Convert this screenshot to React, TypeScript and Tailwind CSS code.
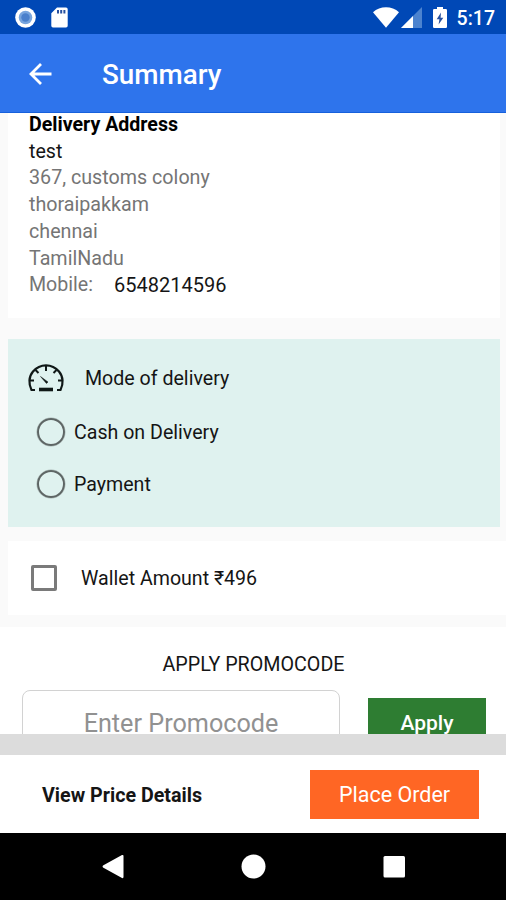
import React from 'react';

const addressLines = ['367, customs colony', 'thoraipakkam', 'chennai', 'TamilNadu'];

const StatusBar: React.FC = () => (
  <div className="flex h-[34px] shrink-0 items-center justify-between bg-[#0048b6] pr-[11px] pl-[15px]">
    <div className="flex items-center gap-[15px]">
      <svg className="h-[21px] w-[21px]" viewBox="0 0 21 21">
        <circle cx="10.5" cy="10.5" r="10.3" fill="#fff" />
        <circle cx="10.5" cy="10.5" r="6.8" fill="#78a5de" />
        <circle cx="10.5" cy="10.5" r="4.2" fill="#4a80cc" />
      </svg>
      <svg className="h-[21px] w-[17px]" viewBox="0 0 17 21">
        <path d="M6 0.5h9a1.7 1.7 0 0 1 1.7 1.7v16.6a1.7 1.7 0 0 1-1.7 1.7H2a1.7 1.7 0 0 1-1.7-1.7V6.3z" fill="#fff" />
        <path d="M6 3h2v3.5H6zM9.2 3h2v3.5h-2zM12.4 3h2v3.5h-2z" fill="#27509f" />
      </svg>
    </div>
    <div className="flex items-center">
      <svg className="h-[21px] w-[26px]" viewBox="0 0 26 21">
        <path d="M0 5.2C7-1.5 19-1.5 26 5.2L13 20.7z" fill="#fff" />
      </svg>
      <svg className="ml-[2px] h-[21px] w-[21px]" viewBox="0 0 21 21">
        <path d="M21 0v21H0z" fill="#4c83cf" />
        <path d="M12 9v12H0z" fill="#fff" />
      </svg>
      <svg className="ml-[11px] h-[21px] w-[14px]" viewBox="0 0 14 21">
        <path d="M4 0h6v2h2.8a1.2 1.2 0 0 1 1.2 1.2v16.6a1.2 1.2 0 0 1-1.2 1.2H1.2A1.2 1.2 0 0 1 0 19.8V3.2A1.2 1.2 0 0 1 1.2 2H4z" fill="#fff" />
        <path d="M8 5.5L3.7 12.2h2.7L5.6 17.5l4.7-6.8H7.6z" fill="#27509f" />
      </svg>
      <span className="ml-[10px] pt-[3px] text-[19.5px] leading-none font-medium text-white">5:17</span>
    </div>
  </div>
);

const AppBar: React.FC = () => (
  <div className="flex h-[79px] shrink-0 items-center border-b border-[#1660dc] bg-[#2e74ec] pt-[2px] pl-[29px]">
    <svg className="h-[23px] w-[23px]" viewBox="0 0 23 23" fill="none" stroke="#fff" strokeWidth="2.8">
      <path d="M22.5 11H2M12 1L2 11L12 21" />
    </svg>
    <h1 className="ml-[50px] pt-[1px] text-[27.8px] leading-none font-medium text-white">Summary</h1>
  </div>
);

const GaugeIcon: React.FC = () => (
  <svg className="h-[28px] w-[36px]" viewBox="0 0 36 28" fill="none" stroke="#101817">
    <path d="M7 26H3.5C.4 20 .7 12.5 5 7.5c7-8.300 19-8.300 26 0 4.3 5 4.6 12.5 1.5 18.500h-3.500" strokeWidth="2.2" />
    <path d="M18 2v5M7.5 6l3 3M28.5 6l-3 3M1.5 16.5h4.500M34.500 16.500h-4.500" strokeWidth="2" />
    <path d="M12.5 12.5l7.5 5.5-1.5 1.500z" fill="#101817" strokeWidth="0.5" />
    <path d="M11 25.5h14" strokeWidth="3.6" />
  </svg>
);

const RadioRow: React.FC<{ label: string }> = ({ label }) => (
  <label className="flex h-[52px] items-center">
    <span className="h-[28px] w-[28px] rounded-full border-2 border-[#5e6665] ring-[0.5px] ring-[#5e6665]/40" />
    <span className="ml-[9px] pt-[1px] text-[19.6px]">{label}</span>
  </label>
);

const App: React.FC = () => (
  <div className="flex h-[900px] w-[506px] flex-col overflow-hidden bg-[#fafafa] font-['Roboto',sans-serif] text-[19.6px] text-[#151515]">
    <StatusBar />
    <AppBar />

    <main className="h-[621px] shrink-0 overflow-hidden">
      <section className="mr-[6px] ml-[8px] h-[205px] bg-white pl-[21px] leading-[26.7px]">
        <div className="relative -top-px">
          <div className="text-[19.6px] font-bold text-black">Delivery Address</div>
          <div>test</div>
          {addressLines.map((line) => (
            <div key={line} className="text-[19.7px] text-[#757575]">{line}</div>
          ))}
          <div className="flex">
            <span className="w-[85px] text-[#757575]">Mobile:</span>
            <span className="text-[20px]">6548214596</span>
          </div>
        </div>
      </section>

      <section className="mt-[21px] mr-[6px] ml-[8px] h-[188px] bg-[#dff2ef] pl-[20px]">
        <div className="flex h-[67px] items-center pt-[11px]">
          <GaugeIcon />
          <span className="ml-[21px] pt-[2px]">Mode of delivery</span>
        </div>
        <div className="pl-[9px]">
          <RadioRow label="Cash on Delivery" />
          <RadioRow label="Payment" />
        </div>
      </section>

      <section className="mt-[14px] ml-[8px] flex h-[74px] items-center bg-white pl-[23px]">
        <span className="h-[26px] w-[26px] rounded-[2px] border-[3px] border-[#7a7a7a]" />
        <span className="ml-[24px] pt-[2px]">Wallet Amount ₹496</span>
      </section>

      <section className="mt-[12px] bg-white">
        <h2 className="flex h-[63px] items-center justify-center pt-[12px] pl-[1px] text-[19.7px]">APPLY PROMOCODE</h2>
        <div className="flex pl-[22px]">
          <div className="flex h-[66px] w-[318px] items-center justify-center rounded-[8px] border border-[#d2d2d2] pt-[2px] text-[25.2px] text-[#919191]">
            Enter Promocode
          </div>
          <button className="mt-[8px] ml-[28px] h-[50px] w-[118px] bg-[#2e7d32] pt-[1px] text-[21px] font-medium text-white">Apply</button>
        </div>
      </section>
    </main>

    <div className="h-[21px] shrink-0 bg-[#dcdcdc]" />
    <footer className="flex h-[78px] shrink-0 items-center justify-between bg-white pr-[27px] pl-[42px]">
      <span className="pt-[3px] text-[19.7px] font-bold">View Price Details</span>
      <button className="h-[49px] w-[169px] bg-[#ff6624] pt-[3px] text-[21.5px] text-white">Place Order</button>
    </footer>

    <nav className="h-[67px] shrink-0 bg-black">
      <svg className="h-[67px] w-[506px]" viewBox="0 0 506 67" fill="#fff">
        <path d="M103 32.5L122 22q1.5-.5 1.5 1v21q0 1.5-1.5 1L103 34.5q-1-1 0-2z" />
        <circle cx="253.5" cy="33.5" r="12" />
        <rect x="383.5" y="23" width="21.5" height="21.5" rx="1.5" />
      </svg>
    </nav>
  </div>
);

export default App;
